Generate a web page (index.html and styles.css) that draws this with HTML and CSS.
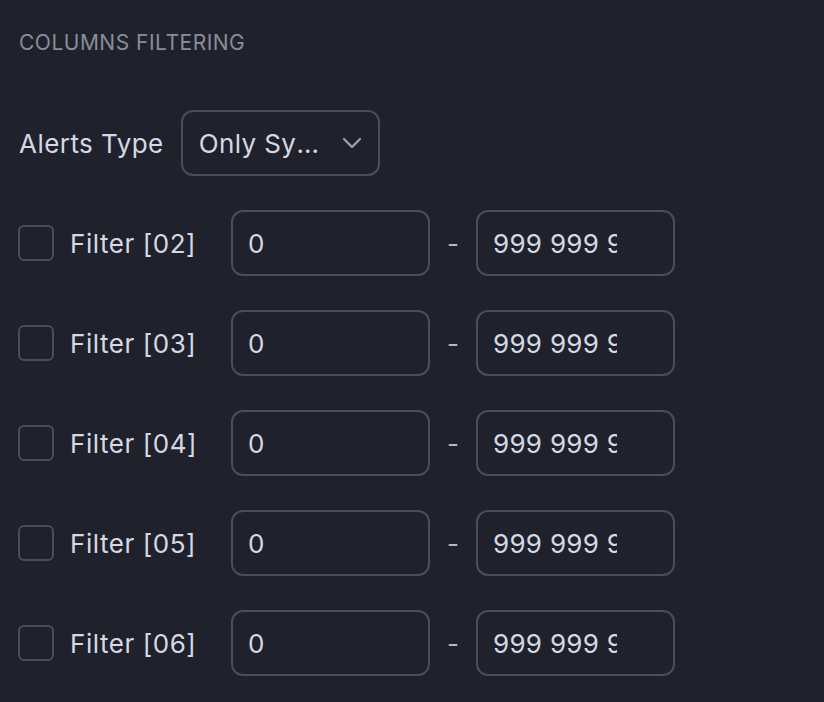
FILE: index.html
```html
<!DOCTYPE html>
<html>
<head>
  <title>Columns Filtering</title>
  <link rel="stylesheet" href="styles.css">
</head>
<body>
  <div class="panel">
    <h4 class="section-title">Columns Filtering</h4>

    <div class="alerts-row">
      <label class="alerts-label">Alerts Type</label>
      <div class="select">
        <span class="select-value">Only System Alerts</span>
        <svg class="chevron" width="20" height="12" viewBox="0 0 20 12">
          <path d="M2 2 L10 10 L18 2" fill="none" stroke="#9a9da8" stroke-width="2.4" stroke-linecap="round" stroke-linejoin="round"/>
        </svg>
      </div>
    </div>

    <div class="filter-row">
      <input type="checkbox" class="check" id="f02">
      <label for="f02" class="filter-label">Filter [02]</label>
      <input type="text" class="range-input" value="0">
      <span class="dash">-</span>
      <input type="text" class="range-input max" value="999 999 999">
    </div>
    <div class="filter-row">
      <input type="checkbox" class="check" id="f03">
      <label for="f03" class="filter-label">Filter [03]</label>
      <input type="text" class="range-input" value="0">
      <span class="dash">-</span>
      <input type="text" class="range-input max" value="999 999 999">
    </div>
    <div class="filter-row">
      <input type="checkbox" class="check" id="f04">
      <label for="f04" class="filter-label">Filter [04]</label>
      <input type="text" class="range-input" value="0">
      <span class="dash">-</span>
      <input type="text" class="range-input max" value="999 999 999">
    </div>
    <div class="filter-row">
      <input type="checkbox" class="check" id="f05">
      <label for="f05" class="filter-label">Filter [05]</label>
      <input type="text" class="range-input" value="0">
      <span class="dash">-</span>
      <input type="text" class="range-input max" value="999 999 999">
    </div>
    <div class="filter-row">
      <input type="checkbox" class="check" id="f06">
      <label for="f06" class="filter-label">Filter [06]</label>
      <input type="text" class="range-input" value="0">
      <span class="dash">-</span>
      <input type="text" class="range-input max" value="999 999 999">
    </div>
  </div>
</body>
</html>
```

FILE: styles.css
```css
body {
  font-family: Inter, "Noto Sans", sans-serif;
  background-color: #1f222d;
  color: #d6d9e1;
  margin: 0;
  padding: 0;
}

.panel {
  display: flex;
  flex-direction: column;
  gap: 34px;
  padding: 30px 0 0 19px;
}

.section-title {
  margin: 0 0 21px 0;
  font-size: 21px;
  line-height: 25px;
  font-weight: 400;
  letter-spacing: 0.5px;
  text-transform: uppercase;
  color: #8a8d99;
}

.alerts-row {
  display: flex;
  align-items: center;
  gap: 17px;
}

.alerts-label {
  font-size: 26px;
  letter-spacing: 0.45px;
}

.select {
  box-sizing: border-box;
  width: 199px;
  height: 66px;
  border: 2px solid #4b4e59;
  border-radius: 12px;
  display: flex;
  align-items: center;
  padding: 0 16px 0 16px;
  gap: 14px;
}

.select-value {
  flex: 1;
  min-width: 0;
  font-size: 26px;
  letter-spacing: 0.4px;
  white-space: nowrap;
  overflow: hidden;
  text-overflow: ellipsis;
}

.chevron {
  flex: none;
}

.filter-row {
  display: flex;
  align-items: center;
}

.check {
  appearance: none;
  box-sizing: border-box;
  width: 36px;
  height: 36px;
  margin: 0 16px 0 -1px;
  border: 2px solid #4b4e59;
  border-radius: 6px;
  background: transparent;
}

.filter-label {
  width: 161px;
  font-size: 26px;
  letter-spacing: 0.55px;
}

.range-input {
  box-sizing: border-box;
  width: 199px;
  height: 66px;
  padding: 0 16px 0 15px;
  border: 2px solid #4b4e59;
  border-radius: 12px;
  background: transparent;
  color: #d6d9e1;
  font-family: Inter, "Noto Sans", sans-serif;
  font-size: 26px;
  letter-spacing: 0.3px;
  outline: none;
}

.range-input.max {
  padding-right: 56px;
}

.dash {
  width: 46px;
  text-align: center;
  font-size: 26px;
  color: #b4b7c0;
}
```
